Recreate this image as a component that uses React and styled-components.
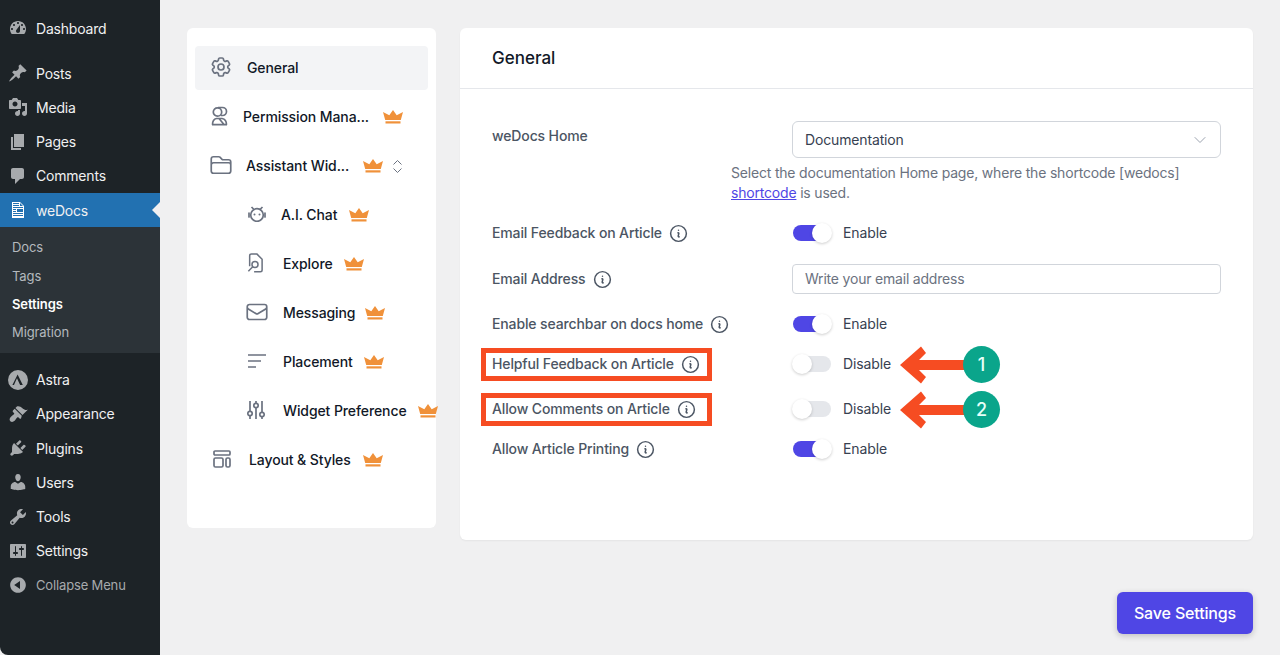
import React from "react";
import styled, { createGlobalStyle } from "styled-components";
import {
  HiOutlineCog6Tooth,
  HiOutlineFolder,
  HiOutlineEnvelope,
  HiOutlineChevronDown,
  HiOutlineInformationCircle,
} from "react-icons/hi2";

const GlobalStyle = createGlobalStyle`
  html, body {
    margin: 0;
    padding: 0;
    height: 100%;
    overflow: hidden;
    background: #f0f0f1;
  }
  * {
    box-sizing: border-box;
  }
  body {
    font-family: Inter, "Liberation Sans", sans-serif;
  }
`;

const Page = styled.div`
  display: flex;
  width: 1280px;
  height: 655px;
  overflow: hidden;
`;

// wp admin menu
const Sidebar = styled.nav`
  width: 160px;
  flex: none;
  background: #1d2327;
  padding-top: 11px;
  border-bottom-left-radius: 8px;
`;

const MenuItem = styled.div`
  position: relative;
  display: flex;
  align-items: center;
  height: 34.2px;
  padding-left: 8px;
  margin-bottom: ${(p) => p.$after || 0}px;
  background: ${(p) => (p.$active ? "#2271b1" : "transparent")};
  color: ${(p) => (p.$muted ? "#a7aaad" : "#f0f0f1")};
  font-size: ${(p) => (p.$muted ? 13 : 14)}px;
  letter-spacing: ${(p) => (p.$muted ? -0.15 : -0.2)}px;

  svg {
    width: 20px;
    height: 20px;
    margin-right: 8px;
    fill: ${(p) => (p.$active ? "#fff" : "#a7aaad")};
    flex: none;
  }

  ${(p) =>
    p.$active &&
    `&::after {
      content: "";
      position: absolute;
      right: 0;
      top: 50%;
      margin-top: -8px;
      border: 8px solid transparent;
      border-right-color: #f0f0f1;
      border-left-width: 0;
    }`}
`;

const SubMenu = styled.div`
  background: #2c3338;
  padding: 6px 0;
  margin-bottom: 10px;
`;

const SubItem = styled.div`
  display: flex;
  align-items: center;
  height: 28.4px;
  padding-left: 12px;
  font-size: 13px;
  letter-spacing: -0.1px;
  color: ${(p) => (p.$current ? "#fff" : "#b4b9be")};
  font-weight: ${(p) => (p.$current ? 600 : 400)};
`;

const Content = styled.main`
  flex: 1;
  padding: 28px 27px 0;
  display: flex;
  flex-direction: column;
`;

const Cards = styled.div`
  display: flex;
  align-items: flex-start;
  gap: 24px;
`;

const SideCard = styled.div`
  width: 249px;
  flex: none;
  background: #fff;
  border-radius: 6px;
  padding: 18px 8px 46px;
  display: flex;
  flex-direction: column;
  gap: 5px;
`;

const NavRow = styled.div`
  display: flex;
  align-items: center;
  height: 44px;
  padding-left: ${(p) => p.$indent}px;
  padding-bottom: 2px;
  border-radius: 4px;
  background: ${(p) => (p.$active ? "#f3f4f6" : "transparent")};
  color: #111827;
  font-size: 14px;
  font-weight: 500;
  letter-spacing: -0.1px;
  white-space: nowrap;
`;

const NavIcon = styled.span`
  display: flex;
  flex: none;
  width: ${(p) => p.$w}px;
  margin-right: ${(p) => p.$gap}px;
  color: #6b7280;

  svg {
    display: block;
    width: 100%;
    height: auto;
    stroke-width: 1.7;
  }
`;

const CrownMark = styled.svg`
  width: 20px;
  height: 14px;
  flex: none;
  margin-left: ${(p) => p.$gap}px;
  margin-top: 2px;
  fill: #f0913a;
`;

const UpDown = styled.svg`
  width: 9px;
  height: 13px;
  flex: none;
  margin-left: 10px;
  margin-top: 2px;
  fill: none;
  stroke: #6b7280;
  stroke-width: 1;
`;

const MainCard = styled.section`
  flex: 1;
  background: #fff;
  border-radius: 6px;
  box-shadow: 0 1px 2px rgba(0, 0, 0, 0.05);
`;

const CardHead = styled.h2`
  margin: 0;
  height: 61px;
  padding: 0 32px 1px;
  display: flex;
  align-items: center;
  border-bottom: 1px solid #e5e7eb;
  font-size: 17px;
  font-weight: 500;
  color: #111827;
`;

const CardBody = styled.div`
  padding: 32px 32px 79px;
`;

const Row = styled.div`
  display: grid;
  grid-template-columns: 300px 1fr;
  align-items: ${(p) => (p.$top ? "start" : "center")};
  min-height: 24px;
  margin-top: ${(p) => p.$mt || 0}px;
`;

const Label = styled.div`
  position: relative;
  display: flex;
  align-items: center;
  width: fit-content;
  gap: 6px;
  font-size: 14px;
  font-weight: 500;
  letter-spacing: -0.13px;
  line-height: 24px;
  color: #4b5563;
  padding-top: ${(p) => (p.$top ? 3 : 0)}px;

  svg {
    width: 21px;
    height: 21px;
    stroke-width: 1.7;
  }
`;

// orange annotation frame, sits over the label
const RedFrame = styled.span`
  position: absolute;
  left: -11px;
  top: -4px;
  width: 231px;
  height: 33px;
  border: 5px solid #f64c22;
  pointer-events: none;
`;

const Select = styled.div`
  height: 37px;
  display: flex;
  align-items: center;
  justify-content: space-between;
  padding: 0 12px;
  background: #fff;
  border: 1px solid #d1d5db;
  border-radius: 6px;
  font-size: 14px;
  letter-spacing: -0.15px;
  color: #374151;

  svg {
    width: 16px;
    height: 16px;
    color: #9ca3af;
  }
`;

const Input = styled.div`
  height: 30px;
  display: flex;
  align-items: center;
  padding: 0 12px 1px;
  background: #fff;
  border: 1px solid #d1d5db;
  border-radius: 4px;
  font-size: 14px;
  letter-spacing: -0.2px;
  color: #6b7280;
`;

const Help = styled.p`
  margin: 5px 0 0 239px;
  font-size: 14px;
  letter-spacing: -0.19px;
  line-height: 20px;
  color: #6b7280;

  a {
    color: #4f46e5;
    text-decoration: underline;
  }
`;

const ToggleWrap = styled.div`
  position: relative;
  display: flex;
  align-items: center;
  gap: 12px;
  margin-left: 1px;
  padding-bottom: 1px;
  font-size: 14px;
  letter-spacing: -0.1px;
  color: #374151;
`;

const Track = styled.span`
  position: relative;
  width: 38px;
  height: 16px;
  margin-top: 1px;
  border-radius: 8px;
  background: ${(p) => (p.$on ? "#4f46e5" : "#e5e7eb")};
`;

const Knob = styled.span`
  position: absolute;
  top: -2px;
  left: ${(p) => (p.$on ? 19 : -1)}px;
  width: 20px;
  height: 20px;
  border-radius: 50%;
  background: #fff;
  box-shadow: 0 1px 3px rgba(0, 0, 0, 0.2);
`;

const Callout = styled.span`
  position: absolute;
  left: 106px;
  top: -9.5px;
  width: 101px;
  height: 38px;
  display: block;

  svg {
    display: block;
  }
`;

const CalloutBadge = styled.span`
  position: absolute;
  right: 0;
  top: 0;
  width: 37px;
  height: 37px;
  border-radius: 50%;
  background: #0aa58b;
  color: #e6fff8;
  font-size: 18px;
  font-weight: 500;
  display: flex;
  align-items: center;
  justify-content: center;
`;

const Footer = styled.div`
  display: flex;
  justify-content: flex-end;
  margin-top: 52px;
`;

const SaveButton = styled.button`
  width: 136px;
  height: 42px;
  border: none;
  border-radius: 6px;
  background: #4f46e5;
  color: #fff;
  font-family: inherit;
  font-size: 16px;
  font-weight: 500;
  letter-spacing: -0.15px;
  box-shadow: 0 2px 6px rgba(0, 0, 0, 0.2);
`;

const Dash = ({ d }) => (
  <svg viewBox="0 0 20 20">
    <path fillRule="evenodd" d={d} />
  </svg>
);

const wpIcons = {
  dashboard:
    "M3.76 16h12.48c1.1-1.37 1.76-3.11 1.76-5 0-4.42-3.58-8-8-8s-8 3.58-8 8c0 1.89.66 3.63 1.76 5zM10 4c.55 0 1 .45 1 1s-.45 1-1 1-1-.45-1-1 .45-1 1-1zM6 6c.55 0 1 .45 1 1s-.45 1-1 1-1-.45-1-1 .45-1 1-1zm8 0c.55 0 1 .45 1 1s-.45 1-1 1-1-.45-1-1 .45-1 1-1zm-5.37 5.55L12 7v6c0 1.1-.9 2-2 2s-2-.9-2-2c0-.57.24-1.08.63-1.45zM4 10c.55 0 1 .45 1 1s-.45 1-1 1-1-.45-1-1 .45-1 1-1zm12 0c.55 0 1 .45 1 1s-.45 1-1 1-1-.45-1-1 .45-1 1-1z",
  posts:
    "M10.44 3.02l1.82-1.82 6.36 6.35-1.83 1.82c-1.05-.68-2.48-.57-3.41.36l-.75.75c-.92.93-1.04 2.35-.35 3.41l-1.83 1.82-2.41-2.41-2.8 2.79c-.42.42-3.38 2.71-3.8 2.29s1.86-3.39 2.28-3.81l2.79-2.79L4.1 9.36l1.83-1.82c1.05.69 2.48.57 3.4-.36l.75-.75c.93-.92 1.05-2.35.36-3.41z",
  media:
    "M13 11V4c0-.55-.45-1-1-1h-1.67L9 1H5L3.67 3H2c-.55 0-1 .45-1 1v7c0 .55.45 1 1 1h10c.55 0 1-.45 1-1zM7 4.5c1.38 0 2.5 1.12 2.5 2.5S8.38 9.5 7 9.5 4.5 8.38 4.5 7 5.62 4.5 7 4.5zM14 6h5v10.5c0 1.38-1.12 2.5-2.5 2.5S14 17.88 14 16.5s1.12-2.5 2.5-2.5c.17 0 .34.02.5.05V9h-3V6zm-4 8.05V13h2v3.5c0 1.38-1.12 2.5-2.5 2.5S7 17.88 7 16.5 8.12 14 9.5 14c.17 0 .34.02.5.05z",
  pages: "M6 15V2h10v13H6zm-1 1h8v2H3V5h2v11z",
  comments:
    "M5 2h9c1.1 0 2 .9 2 2v7c0 1.1-.9 2-2 2h-2l-5 5v-5H5c-1.1 0-2-.9-2-2V4c0-1.1.9-2 2-2z",
  doc: "M12 2l4 4v12H4V2h8zM5 3v1h6V3H5zm7 3h3l-3-3v3zM5 5v1h6V5H5zm10 3V7H5v1h10zM5 10h3V9H5v1zm0 2h3v-1H5v1zm10 0V9H9v3h6zM5 14h10v-1H5v1zm0 2h10v-1H5v1z",
  astra:
    "M10 0a10 10 0 1 0 0 20 10 10 0 0 0 0-20zM9.6 4.5L14.8 15h-2.7l-1.5-3.3-1.6-3.5-1.5 3.3L6 15H4.4z",
  appearance:
    "M14.48 11.06L7.41 3.99l1.5-1.5c.5-.56 2.3-.47 3.51.32 1.21.8 1.43 1.28 2.91 2.1 1.18.64 2.45 1.26 4.45.85zM13.77 11.77L6.7 4.7 4.93 6.47c-.39.39-.39 1.02 0 1.41l1.06 1.06c.39.39.39 1.03 0 1.42-.6.6-1.43 1.11-2.21 1.69-.35.26-.7.53-1.01.84-1.35 1.34-1.55 3.17-.44 4.28 1.11 1.11 2.94.91 4.28-.44.31-.31.58-.66.84-1.01.58-.78 1.09-1.61 1.69-2.21.39-.39 1.03-.39 1.42 0l1.06 1.06c.39.39 1.02.39 1.41 0z",
  plugins:
    "M13.11 4.36L9.87 7.6 8 5.73l3.24-3.24c.35-.34 1.05-.2 1.56.32.52.51.66 1.21.31 1.55zm-8 1.77l.91-1.12 9.01 9.01-1.19.84c-.71.71-2.63 1.16-3.82 1.16H6.14L4.9 17.26c-.59.59-1.54.59-2.12 0-.59-.58-.59-1.53 0-2.12l1.24-1.24v-3.88c0-1.13.4-3.19 1.09-3.89zm7.26 3.97l3.24-3.24c.34-.35 1.04-.21 1.55.31.52.51.66 1.21.31 1.55l-3.24 3.25z",
  users:
    "M10 9.25c-2.27 0-2.73-3.44-2.73-3.44C7 4.02 7.82 2 9.97 2c2.16 0 2.98 2.02 2.71 3.81 0 0-.41 3.44-2.68 3.44zm0 2.57L12.72 10c2.39 0 4.52 2.33 4.52 4.53v2.49s-3.65 1.13-7.24 1.13c-3.65 0-7.24-1.13-7.24-1.13v-2.49c0-2.25 1.94-4.48 4.47-4.48z",
  tools:
    "M16.68 9.77c-1.34 1.34-3.3 1.67-4.95.99l-5.41 6.52c-.99.99-2.59.99-3.58 0s-.99-2.59 0-3.57l6.52-5.42c-.68-1.65-.35-3.61.99-4.95 1.28-1.28 3.12-1.62 4.72-1.06l-2.89 2.89 2.82 2.82 2.86-2.87c.53 1.58.18 3.39-1.08 4.65zM3.81 16.21c.4.39 1.04.39 1.43 0 .4-.4.4-1.04 0-1.43-.39-.4-1.03-.4-1.43 0-.39.39-.39 1.03 0 1.43z",
  settings:
    "M18 16V4c0-.55-.45-1-1-1H3c-.55 0-1 .45-1 1v12c0 .55.45 1 1 1h14c.55 0 1-.45 1-1zM8 11h1c.55 0 1 .45 1 1s-.45 1-1 1H8v1.5c0 .28-.22.5-.5.5s-.5-.22-.5-.5V13H6c-.55 0-1-.45-1-1s.45-1 1-1h1V5.5c0-.28.22-.5.5-.5s.5.22.5.5V11zm5-2h-1c-.55 0-1-.45-1-1s.45-1 1-1h1V5.5c0-.28.22-.5.5-.5s.5.22.5.5V7h1c.55 0 1 .45 1 1s-.45 1-1 1h-1v5.5c0 .28-.22.5-.5.5s-.5-.22-.5-.5V9z",
  collapse:
    "M10 2.16c4.33 0 7.84 3.51 7.84 7.84s-3.51 7.84-7.84 7.84S2.16 14.33 2.16 10 5.71 2.16 10 2.16zm2 11.72V6.12L6.18 9.97z",
};

const Crown = ({ gap }) => (
  <CrownMark $gap={gap} viewBox="0 0 20 14">
    <path d="M10 0l3.700 5.200L20 2l-2.200 8H2.200L0 2l6.300 3.200z" />
    <rect x="2.500" y="11.300" width="15" height="2.200" />
  </CrownMark>
);

const PeopleIcon = () => (
  <svg viewBox="0 0 17 20" fill="none" stroke="currentColor" strokeWidth="1.5">
    <circle cx="6.500" cy="6" r="4.200" />
    <path d="M7 1.500h4.500a3.800 3.800 0 0 1 0 8H9.800" />
    <path d="M1 18.700h15M1.500 18.700c0-3.200 1.500-5.700 4-6.200h5.500c2.500.5 4.500 3 4.500 6.200M8 12.500l5 6" />
  </svg>
);

const BotIcon = () => (
  <svg viewBox="0 0 18 16" fill="none" stroke="currentColor" strokeWidth="1.5">
    <circle cx="9" cy="9" r="6.300" />
    <path d="M1 7v4M17 7v4" strokeLinecap="round" />
    <path d="M3.500 1l2.500 2.500M14.500 1L12 3.500" />
    <circle cx="6.500" cy="8.500" r="1" fill="currentColor" stroke="none" />
    <circle cx="11.500" cy="8.500" r="1" fill="currentColor" stroke="none" />
  </svg>
);

const FileSearchIcon = () => (
  <svg viewBox="0 0 18 22" fill="none" stroke="currentColor" strokeWidth="1.600" strokeLinejoin="round">
    <path d="M3 15V3a2 2 0 0 1 2-2h6l6 6v12a2 2 0 0 1-2 2H8" />
    <circle cx="9" cy="13" r="3.400" />
    <path d="M6.500 15.500L1.500 20.500" />
  </svg>
);

const LinesIcon = () => (
  <svg viewBox="0 0 20 16" fill="none" stroke="currentColor" strokeWidth="1.600">
    <path d="M1 2h18M1 8h13M1 14h8" />
  </svg>
);

const SlidersIcon = () => (
  <svg viewBox="0 0 18 20" fill="none" stroke="currentColor" strokeWidth="1.500">
    <path d="M3 1v10M3 16v3M9 1v2M9 8v11M15 1v11M15 17v2" />
    <circle cx="3" cy="13.500" r="2.200" />
    <circle cx="9" cy="5.500" r="2.200" />
    <circle cx="15" cy="14.500" r="2.200" />
  </svg>
);

const LayoutIcon = () => (
  <svg viewBox="0 0 18 18" fill="none" stroke="currentColor" strokeWidth="1.600">
    <rect x="1" y="1" width="16" height="4" rx="1" />
    <rect x="1" y="8" width="9" height="9" rx="1.500" />
    <rect x="13" y="8" width="4" height="9" rx="1.500" />
  </svg>
);

const Toggle = ({ on }) => (
  <ToggleWrap>
    <Track $on={on}>
      <Knob $on={on} />
    </Track>
    {on ? "Enable" : "Disable"}
  </ToggleWrap>
);

const Info = () => <HiOutlineInformationCircle />;

const ArrowCallout = ({ n }) => (
  <Callout>
    <svg width="72" height="38" viewBox="0 0 72 38">
      <path d="M1 19L22 .5 27 7l-7 7h52v10H20l7 7-5 6.500z" fill="#f64c22" />
    </svg>
    <CalloutBadge>{n}</CalloutBadge>
  </Callout>
);

const mainMenu = [
  ["Posts", "posts"],
  ["Media", "media"],
  ["Pages", "pages"],
  ["Comments", "comments"],
];

const lowerMenu = [
  ["Astra", "astra"],
  ["Appearance", "appearance"],
  ["Plugins", "plugins"],
  ["Users", "users"],
  ["Tools", "tools"],
  ["Settings", "settings"],
];

const navItems = [
  { label: "Permission Mana...", icon: <PeopleIcon />, indent: 16, w: 17, gap: 15, crown: 14 },
  { label: "Assistant Wid...", icon: <HiOutlineFolder />, indent: 14, w: 24, gap: 13, crown: 14, updown: true },
  { label: "A.I. Chat", icon: <BotIcon />, indent: 53, w: 18, gap: 15, crown: 12 },
  { label: "Explore", icon: <FileSearchIcon />, indent: 52, w: 16, gap: 20, crown: 11 },
  { label: "Messaging", icon: <HiOutlineEnvelope />, indent: 50, w: 24, gap: 14, crown: 10 },
  { label: "Placement", icon: <LinesIcon />, indent: 52, w: 20, gap: 16, crown: 11 },
  { label: "Widget Preference", icon: <SlidersIcon />, indent: 52, w: 18, gap: 18, crown: 11 },
  { label: "Layout & Styles", icon: <LayoutIcon />, indent: 18, w: 18, gap: 18, crown: 12 },
];

export default function App() {
  return (
    <>
      <GlobalStyle />
      <Page>
        <Sidebar>
          <MenuItem $after={11}>
            <Dash d={wpIcons.dashboard} />
            Dashboard
          </MenuItem>
          {mainMenu.map(([label, icon]) => (
            <MenuItem key={label}>
              <Dash d={wpIcons[icon]} />
              {label}
            </MenuItem>
          ))}
          <MenuItem $active>
            <Dash d={wpIcons.doc} />
            weDocs
          </MenuItem>
          <SubMenu>
            <SubItem>Docs</SubItem>
            <SubItem>Tags</SubItem>
            <SubItem $current>Settings</SubItem>
            <SubItem>Migration</SubItem>
          </SubMenu>
          {lowerMenu.map(([label, icon]) => (
            <MenuItem key={label}>
              <Dash d={wpIcons[icon]} />
              {label}
            </MenuItem>
          ))}
          <MenuItem $muted>
            <Dash d={wpIcons.collapse} />
            Collapse Menu
          </MenuItem>
        </Sidebar>

        <Content>
          <Cards>
            <SideCard>
              <NavRow $active $indent={14}>
                <NavIcon $w={24} $gap={14}>
                  <HiOutlineCog6Tooth />
                </NavIcon>
                General
              </NavRow>
              {navItems.map((item) => (
                <NavRow key={item.label} $indent={item.indent}>
                  <NavIcon $w={item.w} $gap={item.gap}>
                    {item.icon}
                  </NavIcon>
                  {item.label}
                  <Crown gap={item.crown} />
                  {item.updown && (
                    <UpDown viewBox="0 0 9 13">
                      <path d="M.5 4.500l4-4 4 4M.5 8.500l4 4 4-4" />
                    </UpDown>
                  )}
                </NavRow>
              ))}
            </SideCard>

            <MainCard>
              <CardHead>General</CardHead>
              <CardBody>
                <Row $top>
                  <Label $top>weDocs Home</Label>
                  <Select>
                    Documentation
                    <HiOutlineChevronDown />
                  </Select>
                </Row>
                <Help>
                  Select the documentation Home page, where the shortcode [wedocs]
                  <br />
                  <a href="#shortcode">shortcode</a> is used.
                </Help>
                <Row $mt={18}>
                  <Label>
                    Email Feedback on Article <Info />
                  </Label>
                  <Toggle on />
                </Row>
                <Row $mt={19}>
                  <Label>
                    Email Address <Info />
                  </Label>
                  <Input>Write your email address</Input>
                </Row>
                <Row $mt={18}>
                  <Label>
                    Enable searchbar on docs home <Info />
                  </Label>
                  <Toggle on />
                </Row>
                <Row $mt={16}>
                  <Label>
                    Helpful Feedback on Article <Info />
                    <RedFrame />
                  </Label>
                  <ToggleWrap>
                    <Track>
                      <Knob />
                    </Track>
                    Disable
                    <ArrowCallout n={1} />
                  </ToggleWrap>
                </Row>
                <Row $mt={21}>
                  <Label>
                    Allow Comments on Article <Info />
                    <RedFrame />
                  </Label>
                  <ToggleWrap>
                    <Track>
                      <Knob />
                    </Track>
                    Disable
                    <ArrowCallout n={2} />
                  </ToggleWrap>
                </Row>
                <Row $mt={16}>
                  <Label>
                    Allow Article Printing <Info />
                  </Label>
                  <Toggle on />
                </Row>
              </CardBody>
            </MainCard>
          </Cards>
          <Footer>
            <SaveButton>Save Settings</SaveButton>
          </Footer>
        </Content>
      </Page>
    </>
  );
}
